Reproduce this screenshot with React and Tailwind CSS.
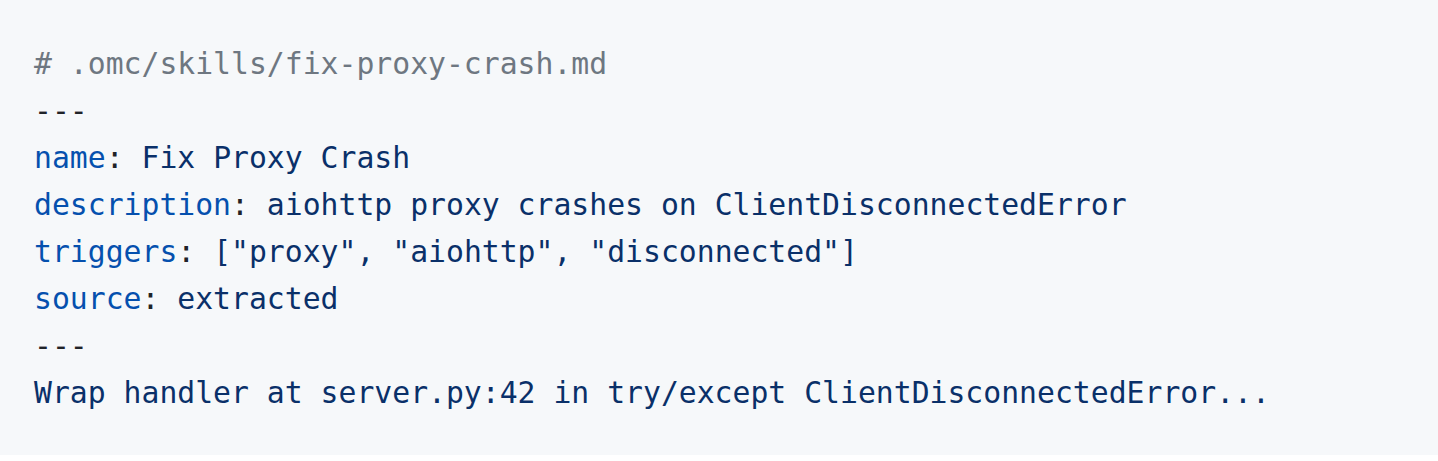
const C = {
  comment: "text-[#6e7781]",
  plain: "text-[#1f2328]",
  key: "text-[#0550ae]",
  str: "text-[#0a3069]",
};

const lines = [
  [["comment", "# .omc/skills/fix-proxy-crash.md"]],
  [["plain", "---"]],
  [["key", "name"], ["plain", ": "], ["str", "Fix Proxy Crash"]],
  [["key", "description"], ["plain", ": "], ["str", "aiohttp proxy crashes on ClientDisconnectedError"]],
  [["key", "triggers"], ["plain", ": "], ["str", "[\"proxy\", \"aiohttp\", \"disconnected\"]"]],
  [["key", "source"], ["plain", ": "], ["str", "extracted"]],
  [["plain", "---"]],
  [["str", "Wrap handler at server.py:42 in try/except ClientDisconnectedError..."]],
];

export default function App() {
  return (
    <div className="w-[1438px] h-[461px] bg-white">
      <pre className="m-0 h-[455px] bg-[#f6f8fa] pt-[40px] pl-[34px] font-['DejaVu_Sans_Mono',monospace] text-[29.75px] leading-[47px]">
        {lines.map((l, i) => (
          <div key={i} className="flex">
            {l.map(([c, t], j) => (
              <span key={j} className={`whitespace-pre ${C[c]}`}>{t}</span>
            ))}
          </div>
        ))}
      </pre>
    </div>
  );
}
